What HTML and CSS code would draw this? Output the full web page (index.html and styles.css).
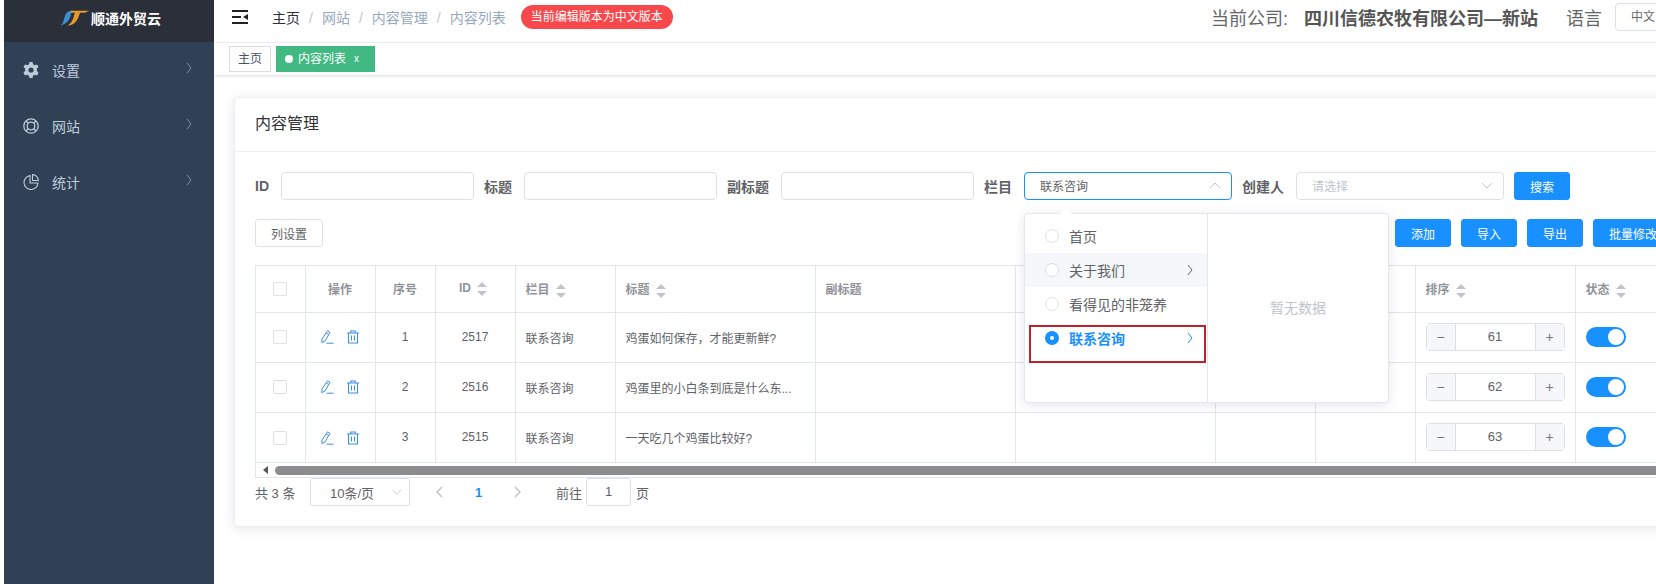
FILE: index.html
```html
<!DOCTYPE html>
<html lang="zh-CN">
<head>
    <meta charset="UTF-8">
    <meta name="viewport" content="width=device-width, initial-scale=1.0">
    <title>内容列表</title>
    <link rel="stylesheet" href="styles.css">
</head>
<body>
    <svg class="icon-defs" width="0" height="0">
        <symbol id="chev-right" viewBox="0 0 6 12"><polyline points="1,1 5,6 1,11" fill="none" stroke="currentColor" stroke-width="1"/></symbol>
        <symbol id="chev-down" viewBox="0 0 12 7"><polyline points="1,1 6,6 11,1" fill="none" stroke="currentColor" stroke-width="1"/></symbol>
        <symbol id="chev-up" viewBox="0 0 12 7"><polyline points="1,6 6,1 11,6" fill="none" stroke="currentColor" stroke-width="1"/></symbol>
        <symbol id="edit" viewBox="0 0 14 14"><path d="M7.500 .8 L10 2.300 L5 11 L1.800 12.600 L2 9 Z M6.300 3 L8.800 4.500" fill="none" stroke="currentColor" stroke-width="1"/><path d="M6.500 13.200 H13.500" stroke="currentColor" stroke-width="1"/></symbol>
        <symbol id="trash" viewBox="0 0 14 14"><path d="M1 3 H13 M4.800 3 V1 H9.200 V3 M2.500 3 V13 H11.500 V3 M5.500 5.500 V10.500 M8.500 5.500 V10.500" fill="none" stroke="currentColor" stroke-width="1.100"/></symbol>
    </svg>

    <aside class="sidebar">
        <div class="logo">
            <svg class="logo-mark" width="29" height="16" viewBox="0 0 29 16">
                <path d="M0 15.500 C3.500 14 3.500 10 5 6 C6 3 8 .8 12 .8 L10.500 6 C9.500 10 6 15 0 15.500 Z" fill="#3d8fd0"/>
                <path d="M11 .8 H29 L25 2.800 H20 C19 6 18 9 16 11.500 C14 14 11 15.500 7.500 15.500 C11 13.500 12.500 10.500 13.500 7.500 C14 5.500 14.500 4 15 2.800 H11 Z" fill="#e59a2c"/>
            </svg>
            <span>顺通外贸云</span>
        </div>
        <nav class="menu">
            <a class="menu-item">
                <svg class="menu-icon" viewBox="0 0 16 16"><path d="M6.500 0 H9.500 L10 2.200 L11.800 3.200 L14 2.500 L15.500 5 L13.800 6.600 V8.800 L15.500 10.800 L14 13.400 L11.800 12.700 L10 13.800 L9.500 16 H6.500 L6 13.800 L4.200 12.700 L2 13.400 L.5 10.800 L2.200 8.800 V6.600 L.5 5 L2 2.500 L4.200 3.200 L6 2.200 Z M8 5.400 A2.600 2.600 0 1 0 8 10.600 A2.600 2.600 0 1 0 8 5.400 Z" fill="#bfcbd9" fill-rule="evenodd"/></svg>
                <span>设置</span>
                <svg class="menu-arrow"><use href="#chev-right"/></svg>
            </a>
            <a class="menu-item">
                <svg class="menu-icon" viewBox="0 0 16 16"><g fill="none" stroke="#bfcbd9" stroke-width="1.300"><circle cx="8" cy="8" r="7.200"/><circle cx="8" cy="8" r="3.800"/><path d="M3 3 L5.300 5.300 M13 3 L10.700 5.300 M3 13 L5.300 10.700 M13 13 L10.700 10.700"/></g></svg>
                <span>网站</span>
                <svg class="menu-arrow"><use href="#chev-right"/></svg>
            </a>
            <a class="menu-item">
                <svg class="menu-icon" viewBox="0 0 16 16"><g fill="none" stroke="#bfcbd9" stroke-width="1.100"><path d="M7 1.600 A7 7 0 1 0 15 9 H7 Z"/><path d="M9.500 .6 A6.200 6.200 0 0 1 15.400 6.500 H9.500 Z"/></g></svg>
                <span>统计</span>
                <svg class="menu-arrow"><use href="#chev-right"/></svg>
            </a>
        </nav>
    </aside>

    <div class="main">
        <header class="navbar">
            <svg class="hamburger" width="16" height="14" viewBox="0 0 16 14">
                <path d="M0 0 H16 V2 H0 Z M0 6 H9 V8 H0 Z M0 12 H16 V14 H0 Z M11 7 L16 4 V10 Z" fill="#222"/>
            </svg>
            <div class="breadcrumb">
                <span class="crumb-home">主页</span><i>/</i><span>网站</span><i>/</i><span>内容管理</span><i>/</i><span>内容列表</span>
            </div>
            <span class="version-badge">当前编辑版本为中文版本</span>
            <div class="navbar-right">
                <span>当前公司:</span>
                <strong>四川信德农牧有限公司—新站</strong>
                <span class="lang-label">语言</span>
                <div class="lang-select">中文</div>
            </div>
        </header>

        <div class="tags-bar">
            <span class="tag">主页</span>
            <span class="tag tag-active"><b class="tag-dot"></b>内容列表<em>x</em></span>
        </div>

        <section class="card">
            <div class="card-header">内容管理</div>
            <div class="card-body">
                <div class="filter-row">
                    <label>ID</label>
                    <div class="input w-193"></div>
                    <label>标题</label>
                    <div class="input w-193"></div>
                    <label>副标题</label>
                    <div class="input w-193"></div>
                    <label>栏目</label>
                    <div class="select-wrap">
                        <div class="input select is-focus">
                            <span>联系咨询</span>
                            <svg class="select-arrow"><use href="#chev-up"/></svg>
                        </div>
                        <div class="cascader">
                            <span class="cascader-tip"></span>
                            <ul class="cascader-list">
                                <li><b class="radio"></b>首页</li>
                                <li class="is-hover"><b class="radio"></b>关于我们<svg class="cascader-arrow"><use href="#chev-right"/></svg></li>
                                <li><b class="radio"></b>看得见的非笼养</li>
                                <li class="is-active"><b class="radio"></b>联系咨询<svg class="cascader-arrow"><use href="#chev-right"/></svg></li>
                            </ul>
                            <div class="cascader-empty">暂无数据</div>
                            <div class="red-mark"></div>
                        </div>
                    </div>
                    <label>创建人</label>
                    <div class="input select is-empty">
                        <span>请选择</span>
                        <svg class="select-arrow"><use href="#chev-down"/></svg>
                    </div>
                    <button class="btn btn-primary">搜索</button>
                </div>

                <div class="tool-row">
                    <button class="btn">列设置</button>
                    <div class="tool-actions">
                        <button class="btn btn-primary">添加</button>
                        <button class="btn btn-primary">导入</button>
                        <button class="btn btn-primary">导出</button>
                        <button class="btn btn-primary">批量修改</button>
                    </div>
                </div>

                <div class="table-wrap">
                    <table class="data-table">
                        <colgroup>
                            <col class="c-49"><col class="c-70"><col class="c-60"><col class="c-80"><col class="c-100"><col class="c-200"><col class="c-200"><col class="c-200"><col class="c-100"><col class="c-100"><col class="c-160"><col>
                        </colgroup>
                        <thead>
                            <tr>
                                <th class="center"><b class="checkbox"></b></th>
                                <th class="center">操作</th>
                                <th class="center">序号</th>
                                <th class="center"><span class="id-head">ID<b class="sort"></b></span></th>
                                <th>栏目<b class="sort"></b></th>
                                <th>标题<b class="sort"></b></th>
                                <th>副标题</th>
                                <th></th>
                                <th></th>
                                <th></th>
                                <th>排序<b class="sort"></b></th>
                                <th>状态<b class="sort"></b></th>
                            </tr>
                        </thead>
                        <tbody>
                            <tr>
                                <td class="center"><b class="checkbox"></b></td>
                                <td class="center ops"><svg class="row-icon"><use href="#edit"/></svg><svg class="row-icon"><use href="#trash"/></svg></td>
                                <td class="center">1</td>
                                <td class="center">2517</td>
                                <td>联系咨询</td>
                                <td>鸡蛋如何保存，才能更新鲜?</td>
                                <td></td><td></td><td></td><td></td>
                                <td><div class="stepper"><span>−</span><div>61</div><span>+</span></div></td>
                                <td><b class="switch"></b></td>
                            </tr>
                            <tr>
                                <td class="center"><b class="checkbox"></b></td>
                                <td class="center ops"><svg class="row-icon"><use href="#edit"/></svg><svg class="row-icon"><use href="#trash"/></svg></td>
                                <td class="center">2</td>
                                <td class="center">2516</td>
                                <td>联系咨询</td>
                                <td>鸡蛋里的小白条到底是什么东...</td>
                                <td></td><td></td><td></td><td></td>
                                <td><div class="stepper"><span>−</span><div>62</div><span>+</span></div></td>
                                <td><b class="switch"></b></td>
                            </tr>
                            <tr>
                                <td class="center"><b class="checkbox"></b></td>
                                <td class="center ops"><svg class="row-icon"><use href="#edit"/></svg><svg class="row-icon"><use href="#trash"/></svg></td>
                                <td class="center">3</td>
                                <td class="center">2515</td>
                                <td>联系咨询</td>
                                <td>一天吃几个鸡蛋比较好?</td>
                                <td></td><td></td><td></td><td></td>
                                <td><div class="stepper"><span>−</span><div>63</div><span>+</span></div></td>
                                <td><b class="switch"></b></td>
                            </tr>
                        </tbody>
                    </table>
                    <div class="h-scroll">
                        <b class="scroll-left"></b>
                        <div class="scroll-thumb"></div>
                    </div>
                </div>

                <div class="pager">
                    <span class="pager-total">共 3 条</span>
                    <div class="pager-size">10条/页<svg class="pager-size-arrow"><use href="#chev-down"/></svg></div>
                    <svg class="pager-arrow pager-prev" viewBox="0 0 7 12"><polyline points="6,1 1,6 6,11" fill="none" stroke="currentColor" stroke-width="1.500"/></svg>
                    <span class="pager-num">1</span>
                    <svg class="pager-arrow pager-next" viewBox="0 0 7 12"><polyline points="1,1 6,6 1,11" fill="none" stroke="currentColor" stroke-width="1.500"/></svg>
                    <span class="pager-goto">前往</span>
                    <div class="pager-input">1</div>
                    <span class="pager-unit">页</span>
                </div>
            </div>
        </section>
    </div>
</body>
</html>
```

FILE: styles.css
```css
* {
    box-sizing: border-box;
}

html,
body {
    margin: 0;
    height: 584px;
    overflow: hidden;
}

body {
    display: flex;
    width: 1656px;
    padding-left: 4px;
    background-color: #fff;
    font-family: "Liberation Sans", "Noto Sans CJK SC", sans-serif;
    color: #606266;
}

.icon-defs {
    position: absolute;
}

/* sidebar */
.sidebar {
    flex: 0 0 210px;
    background-color: #304156;
}

.logo {
    display: flex;
    align-items: center;
    height: 42px;
    padding-left: 56px;
    padding-bottom: 7px;
    background-color: #2b2f3a;
    color: #fff;
    font-size: 14px;
    font-weight: bold;
}

.logo-mark {
    margin-right: 2px;
}

.menu-item {
    display: flex;
    align-items: center;
    height: 56px;
    padding-left: 19px;
    color: #bfcbd9;
    font-size: 14px;
}

.menu-icon {
    width: 16px;
    height: 16px;
    margin-right: 13px;
}

.menu-arrow {
    width: 6px;
    height: 12px;
    margin: -4px 22px 0 auto;
    color: #7f8fa3;
}

/* top bar */
.main {
    flex: 0 0 1521px;
}

.navbar {
    display: flex;
    align-items: center;
    height: 43px;
    padding-left: 18px;
    padding-bottom: 9px;
    border-bottom: 1px solid #f2f2f2;
}

.hamburger {
    margin-right: 24px;
}

.breadcrumb {
    font-size: 14px;
    color: #97a8be;
}

.breadcrumb .crumb-home {
    color: #303133;
}

.breadcrumb i {
    margin: 0 9px;
    font-style: normal;
    color: #c0c4cc;
}

.version-badge {
    height: 24px;
    margin-left: 15px;
    padding: 0 10px;
    border-radius: 12px;
    background-color: #f9484c;
    color: #fff;
    font-size: 12px;
    line-height: 24px;
}

.navbar-right {
    display: flex;
    align-items: center;
    margin-left: auto;
    font-size: 18px;
    color: #666;
}

.navbar-right strong {
    margin-left: 16px;
    color: #555;
}

.lang-label {
    margin-left: 28px;
}

.lang-select {
    width: 120px;
    height: 28px;
    margin-left: 13px;
    padding-left: 15px;
    border: 1px solid #dcdfe6;
    border-radius: 4px;
    font-size: 12px;
    line-height: 26px;
}

/* tags */
.tags-bar {
    display: flex;
    gap: 5px;
    height: 32px;
    padding: 3px 0 0 15px;
    background-color: #fff;
    box-shadow: 0 1px 3px rgba(0, 0, 0, 0.15);
}

.tag {
    height: 26px;
    padding: 0 8px;
    border: 1px solid #d8dce5;
    color: #495060;
    font-size: 12px;
    line-height: 24px;
}

.tag-active {
    display: flex;
    align-items: center;
    padding-right: 15px;
    border-color: #42b983;
    background-color: #42b983;
    color: #fff;
}

.tag-dot {
    width: 8px;
    height: 8px;
    margin-right: 5px;
    border-radius: 50%;
    background-color: #fff;
}

.tag-active em {
    margin-left: 8px;
    font-style: normal;
    font-size: 10px;
}

/* card */
.card {
    height: 430px;
    margin: 22px 21px 0 20px;
    border: 1px solid #ebeef5;
    border-radius: 4px;
    background-color: #fff;
    box-shadow: 0 2px 12px rgba(0, 0, 0, 0.1);
}

.card-header {
    height: 54px;
    padding-left: 20px;
    border-bottom: 1px solid #ebeef5;
    color: #303133;
    font-size: 16px;
    line-height: 52px;
}

.card-body {
    padding: 20px;
}

.filter-row {
    display: flex;
    align-items: center;
    height: 28px;
}

.filter-row label {
    margin-right: 12px;
    font-size: 14px;
    font-weight: bold;
}

.input {
    height: 28px;
    margin-right: 10px;
    border: 1px solid #dcdfe6;
    border-radius: 4px;
    background-color: #fff;
}

.w-193 {
    width: 193px;
}

.select {
    display: flex;
    align-items: center;
    width: 208px;
    padding: 0 10px 1px 15px;
    font-size: 12px;
}

.select.is-focus {
    border-color: #1890ff;
}

.select.is-empty {
    color: #c0c4cc;
}

.select-arrow {
    width: 12px;
    height: 7px;
    margin-left: auto;
    color: #c0c4cc;
}

.select-wrap {
    position: relative;
}

.btn {
    height: 28px;
    padding: 0 15px;
    border: 1px solid #dcdfe6;
    border-radius: 3px;
    background-color: #fff;
    color: #606266;
    font-family: inherit;
    font-size: 12px;
}

.btn-primary {
    border-color: #1890ff;
    background-color: #1890ff;
    color: #fff;
}

.tool-row {
    display: flex;
    height: 28px;
    margin-top: 19px;
}

.tool-actions {
    display: flex;
    flex: none;
    gap: 10px;
    margin-left: 1072px;
}

/* table */
.table-wrap {
    margin-top: 18px;
    border: 1px solid #dfe6ec;
    border-right: 0;
}

.data-table {
    width: 100%;
    table-layout: fixed;
    border-collapse: collapse;
    font-size: 12px;
}

.c-49 { width: 49px; }
.c-60 { width: 60px; }
.c-70 { width: 70px; }
.c-80 { width: 80px; }
.c-100 { width: 100px; }
.c-160 { width: 160px; }
.c-200 { width: 200px; }

.data-table th,
.data-table td {
    padding: 0 10px;
    border: 1px solid #dfe6ec;
    text-align: left;
    white-space: nowrap;
}

.data-table tr > :first-child {
    border-left: 0;
}

.data-table thead tr > * {
    border-top: 0;
}

.data-table tbody tr:last-child td {
    border-bottom: 0;
}

.data-table th {
    height: 46px;
    color: #909399;
    font-weight: bold;
}

.data-table td {
    height: 50px;
}

.data-table .center {
    text-align: center;
}

.data-table .ops {
    padding: 0;
}

.checkbox {
    display: inline-block;
    width: 14px;
    height: 14px;
    border: 1px solid #dcdfe6;
    border-radius: 2px;
    background-color: #fff;
    vertical-align: middle;
}

.row-icon {
    width: 14px;
    height: 14px;
    margin: 0 6px;
    color: #3f8fe0;
    vertical-align: middle;
}

.id-head {
    margin-right: 4px;
}

.sort {
    display: inline-block;
    position: relative;
    width: 10px;
    height: 14px;
    margin-left: 6px;
    vertical-align: middle;
}

.sort::before,
.sort::after {
    content: "";
    position: absolute;
    left: 0;
    border-left: 5px solid transparent;
    border-right: 5px solid transparent;
}

.sort::before {
    top: 0;
    border-bottom: 5px solid #c0c4cc;
}

.sort::after {
    bottom: 0;
    border-top: 5px solid #c0c4cc;
}

.stepper {
    display: flex;
    width: 139px;
    height: 28px;
    border: 1px solid #dcdfe6;
    border-radius: 4px;
}

.stepper span {
    flex: 0 0 28px;
    background-color: #f5f7fa;
    color: #777;
    font-size: 14px;
    line-height: 26px;
    text-align: center;
}

.stepper div {
    flex: 1;
    border-left: 1px solid #dcdfe6;
    border-right: 1px solid #dcdfe6;
    font-size: 13px;
    line-height: 26px;
    text-align: center;
}

.switch {
    display: block;
    position: relative;
    width: 40px;
    height: 20px;
    border-radius: 10px;
    background-color: #1890ff;
}

.switch::after {
    content: "";
    position: absolute;
    top: 2px;
    right: 2px;
    width: 16px;
    height: 16px;
    border-radius: 50%;
    background-color: #fff;
}

.h-scroll {
    display: flex;
    align-items: center;
    height: 15px;
    border-top: 1px solid #dfe6ec;
}

.scroll-left {
    margin-left: 7px;
    margin-right: 7px;
    border-top: 4px solid transparent;
    border-bottom: 4px solid transparent;
    border-right: 5px solid #555;
}

.scroll-thumb {
    flex: 1;
    height: 9px;
    border-radius: 5px 0 0 5px;
    background-color: #8c8c8c;
}

/* pagination */
.pager {
    display: flex;
    align-items: center;
    height: 28px;
    font-size: 13px;
}

.pager-total {
    width: 55px;
}

.pager-size {
    display: flex;
    align-items: center;
    width: 100px;
    height: 28px;
    padding: 0 7px 0 19px;
    border: 1px solid #dcdfe6;
    border-radius: 3px;
}

.pager-size-arrow {
    width: 10px;
    height: 6px;
    margin-left: auto;
    color: #c0c4cc;
}

.pager-arrow {
    width: 7px;
    height: 12px;
    color: #c0c4cc;
}

.pager-prev {
    margin-left: 26px;
}

.pager-num {
    width: 6px;
    margin-left: 32px;
    color: #1890ff;
    font-weight: bold;
}

.pager-next {
    margin-left: 33px;
}

.pager-goto {
    margin-left: 35px;
}

.pager-input {
    width: 45px;
    height: 28px;
    margin-left: 4px;
    border: 1px solid #dcdfe6;
    border-radius: 3px;
    line-height: 26px;
    text-align: center;
}

.pager-unit {
    margin-left: 5px;
}

/* cascader dropdown over the table */
.cascader {
    display: flex;
    position: absolute;
    top: 41px;
    left: 0;
    z-index: 10;
    width: 365px;
    height: 190px;
    border: 1px solid #e4e7ed;
    border-radius: 4px;
    background-color: #fff;
    box-shadow: 0 2px 12px rgba(0, 0, 0, 0.1);
}

.cascader-tip {
    position: absolute;
    top: -6px;
    left: 35px;
    border-left: 6px solid transparent;
    border-right: 6px solid transparent;
    border-bottom: 6px solid #fff;
}

.cascader-list {
    flex: 0 0 183px;
    margin: 0;
    padding: 5px 0 0;
    border-right: 1px solid #e4e7ed;
    list-style: none;
    font-size: 14px;
}

.cascader-list li {
    display: flex;
    align-items: center;
    height: 34px;
    padding: 0 14px 0 20px;
}

.cascader-list li.is-hover {
    background-color: #f5f7fa;
}

.cascader-list li.is-active {
    color: #1890ff;
    font-weight: bold;
}

.radio {
    flex: none;
    width: 14px;
    height: 14px;
    margin-right: 10px;
    border: 1px solid #dcdfe6;
    border-radius: 50%;
    background-color: #fff;
}

.is-active .radio {
    border: 5px solid #1890ff;
}

.cascader-arrow {
    width: 6px;
    height: 12px;
    margin-left: auto;
    color: #606266;
}

.is-active .cascader-arrow {
    color: #1890ff;
}

.cascader-empty {
    flex: 1;
    color: #c0c4cc;
    font-size: 14px;
    line-height: 188px;
    text-align: center;
}

.red-mark {
    position: absolute;
    top: 111px;
    left: 4px;
    width: 177px;
    height: 38px;
    border: 2px solid #c0202c;
}
```
